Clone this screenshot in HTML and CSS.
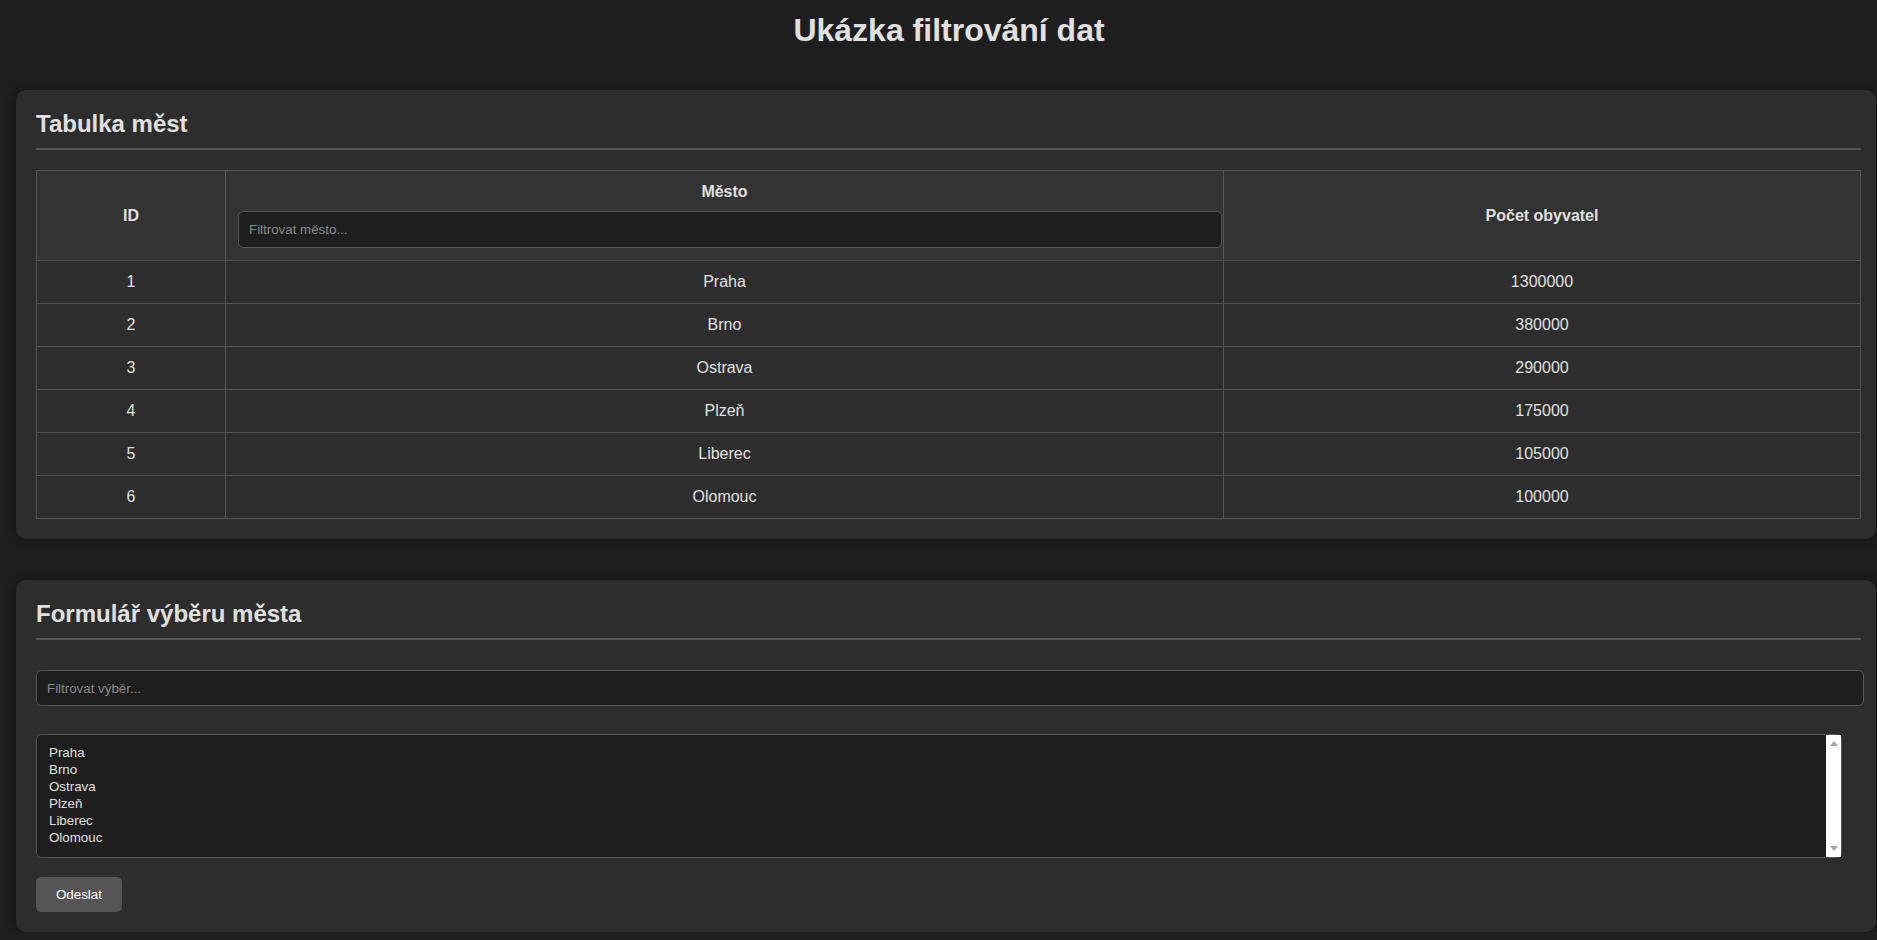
FILE: index.html
```html
<!DOCTYPE html>
<html lang="cs">
<head>
<meta charset="utf-8">
<title>Ukázka filtrování dat</title>
<link rel="stylesheet" href="styles.css">
</head>
<body>
<div class="page">
  <h1 class="title">Ukázka filtrování dat</h1>

  <section class="card">
    <h2 class="card-title">Tabulka měst</h2>
    <table class="cities">
      <colgroup>
        <col class="col-id">
        <col class="col-city">
        <col class="col-pop">
      </colgroup>
      <thead>
        <tr>
          <th>ID</th>
          <th>Město<input class="cell-filter" type="text" placeholder="Filtrovat město..."></th>
          <th>Počet obyvatel</th>
        </tr>
      </thead>
      <tbody>
        <tr><td>1</td><td>Praha</td><td>1300000</td></tr>
        <tr><td>2</td><td>Brno</td><td>380000</td></tr>
        <tr><td>3</td><td>Ostrava</td><td>290000</td></tr>
        <tr><td>4</td><td>Plzeň</td><td>175000</td></tr>
        <tr><td>5</td><td>Liberec</td><td>105000</td></tr>
        <tr><td>6</td><td>Olomouc</td><td>100000</td></tr>
      </tbody>
    </table>
  </section>

  <section class="card">
    <h2 class="card-title">Formulář výběru města</h2>
    <form class="city-form">
      <input class="wide-filter" type="text" placeholder="Filtrovat výběr...">
      <div class="select-wrap">
        <select class="city-select" multiple size="6">
          <option>Praha</option>
          <option>Brno</option>
          <option>Ostrava</option>
          <option>Plzeň</option>
          <option>Liberec</option>
          <option>Olomouc</option>
        </select>
        <div class="fake-scrollbar" aria-hidden="true">
          <span class="arrow arrow-up"></span>
          <span class="arrow arrow-down"></span>
        </div>
      </div>
      <button class="submit" type="button">Odeslat</button>
    </form>
  </section>
</div>
</body>
</html>
```

FILE: styles.css
```css
html, body {
  margin: 0;
  padding: 0;
  background: #1e1e1e;
}

body {
  font-family: "Liberation Sans", Arial, sans-serif;
  color: #e0e0e0;
}

.page {
  display: flex;
  flex-direction: column;
  gap: 41px;
  width: 1860px;
  padding: 12px 0 0 16px;
}

.title {
  margin: 0;
  padding-left: 6px;
  font-size: 32px;
  font-weight: bold;
  text-align: center;
  color: #e0e0e0;
}

.card {
  background: #2d2d2d;
  border-radius: 10px;
  padding: 20px 15px 20px 20px;
  box-shadow: 0 0 10px rgba(0, 0, 0, 0.5);
}

.card-title {
  margin: 0 0 20px;
  padding-bottom: 10px;
  border-bottom: 2px solid #555;
  font-size: 24px;
  font-weight: bold;
  color: #e0e0e0;
}

.cities {
  width: 100%;
  border-collapse: collapse;
  table-layout: fixed;
}

.col-id { width: 189px; }
.col-city { width: 998px; }

.cities th,
.cities td {
  border: 1px solid #555;
  padding: 12px;
  text-align: center;
  vertical-align: middle;
  font-size: 16px;
  color: #e0e0e0;
}

.cities th {
  background: #333;
  font-weight: bold;
}

.cities td {
  background: #2d2d2d;
}

.cell-filter,
.wide-filter {
  display: block;
  box-sizing: border-box;
  margin-top: 10px;
  padding: 10px;
  border: 1px solid #555;
  border-radius: 5px;
  background: #1e1e1e;
  color: #e0e0e0;
  font-family: "Liberation Sans", Arial, sans-serif;
  font-size: 13.33px;
  outline: none;
}

.cell-filter {
  width: calc(100% + 11px);
}

.wide-filter {
  width: calc(100% + 3px);
  height: 36px;
}

.cell-filter::placeholder,
.wide-filter::placeholder {
  color: #888;
}

.city-form {
  display: flow-root;
  margin: 0;
}

.select-wrap {
  position: relative;
  width: calc(100% - 19px);
  margin-top: 28px;
}

.city-select {
  display: block;
  box-sizing: border-box;
  width: 100%;
  margin: 0;
  padding: 10px;
  border: 1px solid #555;
  border-radius: 5px;
  background: #1e1e1e;
  color: #e0e0e0;
  font-family: "Liberation Sans", Arial, sans-serif;
  font-size: 13.33px;
  outline: none;
}

.city-select option {
  color: #e0e0e0;
}

.fake-scrollbar {
  position: absolute;
  top: 1px;
  bottom: 1px;
  right: 1px;
  width: 15px;
  background: #fff;
  display: flex;
  flex-direction: column;
  align-items: center;
  justify-content: space-between;
  padding: 6px 0 6px;
  box-sizing: border-box;
}

.arrow {
  width: 0;
  height: 0;
  border-left: 4.5px solid transparent;
  border-right: 4.5px solid transparent;
}

.arrow-up {
  border-bottom: 5px solid #a3a3a3;
}

.arrow-down {
  border-top: 5px solid #a3a3a3;
}

.submit {
  display: block;
  margin-top: 19px;
  padding: 10px 20px;
  border: none;
  border-radius: 5px;
  background: #555;
  color: #fff;
  font-family: "Liberation Sans", Arial, sans-serif;
  font-size: 13.33px;
}
```
